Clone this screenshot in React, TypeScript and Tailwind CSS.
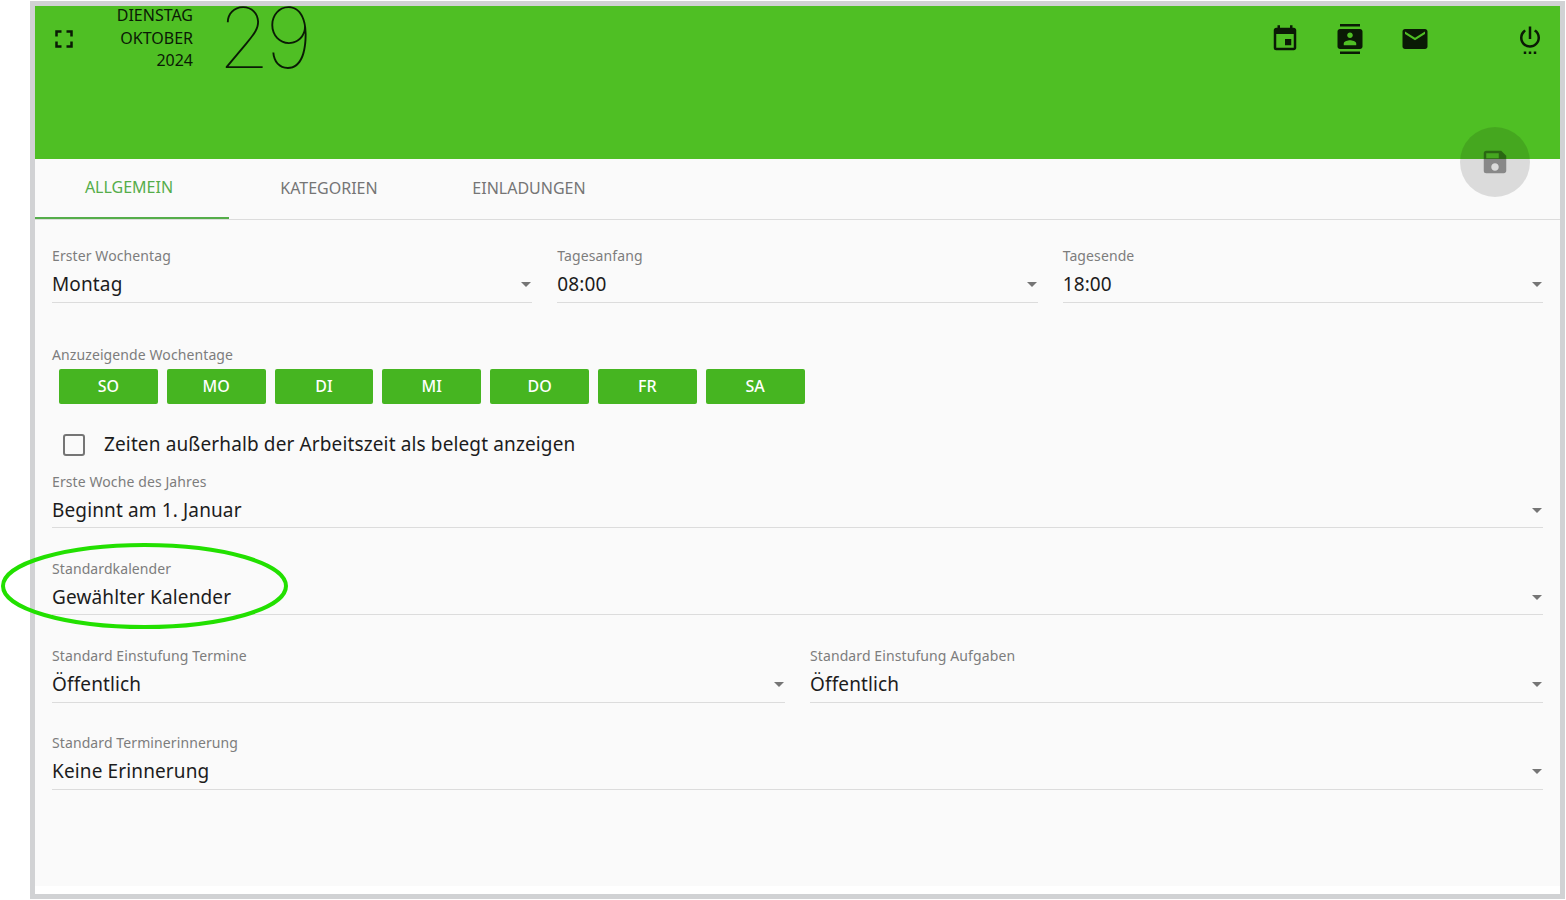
import { MdArrowDropDown, MdContacts, MdEmail, MdEvent, MdFullscreen, MdSave, MdSettingsPower } from 'react-icons/md';

const days = ['SO', 'MO', 'DI', 'MI', 'DO', 'FR', 'SA'];

function SelectField({ label, value, className = '' }: { label: string; value: string; className?: string }) {
  return (
    <div className={`min-w-0 ${className}`}>
      <div className="h-[19px] text-[14px] leading-[19px] tracking-[0.1px] text-[#7d7d7d]">{label}</div>
      <div className="mt-[6px] flex h-[31.5px] items-center justify-between border-b border-[#dcdcdc] pb-[4.5px]">
        <span className="text-[19px] leading-[26px] tracking-[0.13px] text-[#1c1c1c]">{value}</span>
        <MdArrowDropDown className="mr-[-6px] text-[#757575]" size={24} />
      </div>
    </div>
  );
}

export default function App() {
  return (
    <div className="h-[900px] w-[1566px] overflow-hidden bg-white pl-[30px] pt-[1px] font-['Noto_Sans',sans-serif]">
      <div className="relative h-[898px] w-[1535px] border-[5px] border-[#d1d2d4] bg-white">
        <div className="h-[880px] bg-[#fafafa]">
          <header className="flex h-[153px] items-start overflow-hidden bg-[#4fbf24] text-[#0a1a05]">
            <MdFullscreen className="ml-[14px] mt-[18px]" size={30} />
            <div className="mt-[-2px] w-[114px] text-right text-[16px] leading-[22.5px]">
              <div>DIENSTAG</div>
              <div>OKTOBER</div>
              <div>2024</div>
            </div>
            <div className="ml-[25px] mt-[-23px] font-['Inter',sans-serif] text-[84px] font-thin leading-[110px] tracking-[-5px]">29</div>
            <div className="ml-auto flex items-start">
              <MdEvent className="mt-[18px]" size={30} />
              <MdContacts className="ml-[35px] mt-[18px]" size={30} />
              <MdEmail className="ml-[35px] mt-[18px]" size={30} />
              <MdSettingsPower className="ml-[85px] mr-[15px] mt-[18px]" size={30} />
            </div>
          </header>

          <nav className="flex h-[61px] border-b border-[#dcdcdc] text-[16px]">
            <div className="flex h-[60px] w-[194px] items-center justify-center border-b-2 border-[#55ad4a] pb-[3px] pr-[6px] text-[#55ad4a]">ALLGEMEIN</div>
            <div className="flex w-[200px] items-center justify-center pb-[3px] text-[#757575]">KATEGORIEN</div>
            <div className="flex w-[200px] items-center justify-center pb-[3px] text-[#757575]">EINLADUNGEN</div>
          </nav>

          <main className="px-[17px] pt-[26px]">
            <div className="grid grid-cols-3 gap-x-[25px]">
              <SelectField label="Erster Wochentag" value="Montag" />
              <SelectField label="Tagesanfang" value="08:00" />
              <SelectField label="Tagesende" value="18:00" />
            </div>

            <div className="mt-[42.5px] h-[19px] text-[14px] leading-[19px] tracking-[0.1px] text-[#7d7d7d]">Anzuzeigende Wochentage</div>
            <div className="ml-[7px] mt-[5px] flex gap-[9px]">
              {days.map(day => (
                <div key={day} className="flex h-[35px] w-[98.8px] items-center justify-center rounded-[2px] bg-[#46b521] pb-[2px] text-[16px] font-medium text-white">{day}</div>
              ))}
            </div>

            <div className="ml-[11px] mt-[28px] flex h-[26px] items-center">
              <div className="h-[22px] w-[22px] rounded-[3px] border-2 border-[#757575]" />
              <span className="ml-[19px] pb-[2px] text-[19px] tracking-[0.13px] text-[#1c1c1c]">Zeiten außerhalb der Arbeitszeit als belegt anzeigen</span>
            </div>

            <div className="mt-[13.5px] flex flex-col gap-[30.83px]">
              <SelectField label="Erste Woche des Jahres" value="Beginnt am 1. Januar" />
              <SelectField label="Standardkalender" value="Gewählter Kalender" />
              <div className="grid grid-cols-2 gap-x-[25px]">
                <SelectField label="Standard Einstufung Termine" value="Öffentlich" />
                <SelectField label="Standard Einstufung Aufgaben" value="Öffentlich" />
              </div>
              <SelectField label="Standard Terminerinnerung" value="Keine Erinnerung" />
            </div>
          </main>
        </div>

        <div className="absolute left-[1425px] top-[121px] flex h-[70px] w-[70px] items-center justify-center rounded-full bg-[#000000]/[0.12]">
          <MdSave className="text-[#000000]/[0.38]" size={30} />
        </div>

        <svg className="absolute left-[-34px] top-[535px]" width="292" height="92" viewBox="0 0 292 92">
          <ellipse cx="143.5" cy="45" rx="141.5" ry="41" fill="none" stroke="#22e000" strokeWidth="4" />
        </svg>
      </div>
    </div>
  );
}
